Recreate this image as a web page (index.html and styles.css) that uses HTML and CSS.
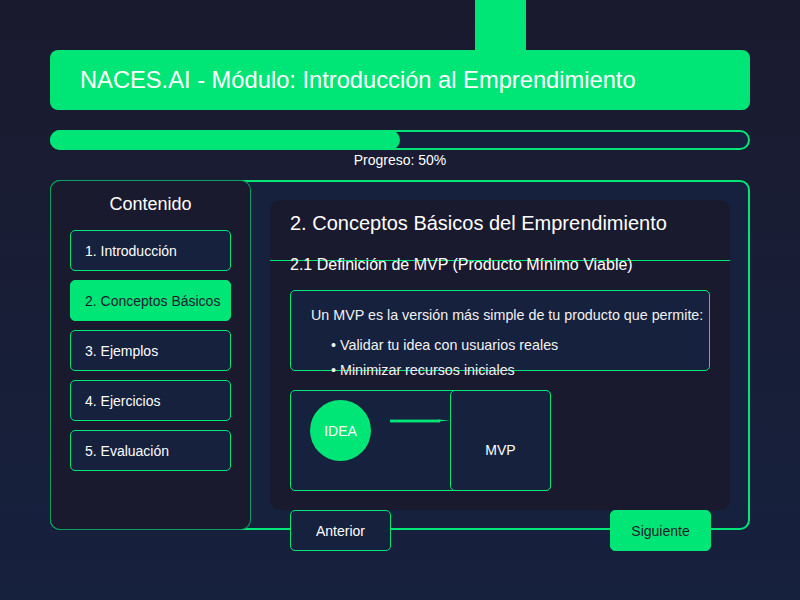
FILE: index.html
```html
<!DOCTYPE html>
<html lang="es">
<head>
<meta charset="utf-8">
<title>NACES.AI</title>
<link rel="stylesheet" href="styles.css">
</head>
<body>
<div class="top-tab"></div>
<header class="header">NACES.AI - Módulo: Introducción al Emprendimiento</header>
<div class="progress"><div class="progress-fill" style="width: 50%"></div></div>
<div class="progress-label">Progreso: 50%</div>
<main class="panel">
  <aside class="sidebar">
    <div class="sidebar-title">Contenido</div>
    <nav class="nav">
      <div class="nav-item">1. Introducción</div>
      <div class="nav-item active">2. Conceptos Básicos</div>
      <div class="nav-item">3. Ejemplos</div>
      <div class="nav-item">4. Ejercicios</div>
      <div class="nav-item">5. Evaluación</div>
    </nav>
  </aside>
  <section class="content">
    <div class="card">
      <h1 class="title">2. Conceptos Básicos del Emprendimiento</h1>
      <div class="divider"></div>
      <h2 class="subtitle">2.1 Definición de MVP (Producto Mínimo Viable)</h2>
      <div class="info">
        <p class="info-text">Un MVP es la versión más simple de tu producto que permite:</p>
        <ul class="info-list">
          <li>• Validar tu idea con usuarios reales</li>
          <li>• Minimizar recursos iniciales</li>
        </ul>
      </div>
      <div class="diagram">
        <div class="idea">IDEA</div>
        <svg class="arrow" width="60" height="10" viewBox="0 0 60 10">
          <rect x="0" y="3.6" width="50" height="2.8" fill="#00e676"/>
          <polygon points="48,3.6 60,4.4 48,5.4" fill="#00e676"/>
        </svg>
        <div class="mvp">MVP</div>
      </div>
    </div>
    <div class="buttons">
      <button class="btn">Anterior</button>
      <button class="btn primary">Siguiente</button>
    </div>
  </section>
</main>
</body>
</html>
```
FILE: styles.css
```css
html, body {
  margin: 0;
  padding: 0;
}
body {
  width: 800px;
  height: 600px;
  overflow: hidden;
  background: linear-gradient(180deg, #1a1a2e 0%, #16213e 100%);
  font-family: "Liberation Sans", Arial, sans-serif;
  color: #ffffff;
}
.top-tab {
  width: 51px;
  height: 50px;
  margin-left: 475px;
  background: #00e676;
}
.header {
  margin: 0 50px;
  height: 60px;
  box-sizing: border-box;
  padding-left: 30px;
  background: #00e676;
  border-radius: 8px;
  font-size: 23.7px;
  line-height: 60px;
  color: #ffffff;
}
.progress {
  margin: 20px 50px 0;
  height: 20px;
  border-radius: 10px;
  background: #16213e;
  box-shadow: inset 0 0 0 2px #00e676;
}
.progress-fill {
  height: 100%;
  background: #00e676;
  border-radius: 10px;
}
.progress-label {
  font-size: 14px;
  line-height: 20px;
  text-align: center;
}
.panel {
  margin: 10px 50px 0;
  height: 350px;
  box-sizing: border-box;
  border: 2px solid #00e676;
  border-radius: 10px;
  background: #16213e;
  display: grid;
  grid-template-columns: 200px 1fr;
  align-items: start;
}
.sidebar {
  width: 201px;
  height: 350px;
  margin: -2px 0 0 -2px;
  box-sizing: border-box;
  padding: 13px 19px 0;
  background: #1a1a2e;
  border: 1px solid rgba(0, 230, 118, 0.65);
  border-radius: 10px;
}
.sidebar-title {
  font-size: 18px;
  line-height: 22px;
  text-align: center;
  margin-top: -1px;
  margin-bottom: 15px;
}
.nav {
  display: flex;
  flex-direction: column;
  gap: 10px;
  width: 161px;
}
.nav-item {
  height: 41px;
  box-sizing: border-box;
  border: 1px solid #00e676;
  border-radius: 5px;
  background: #16213e;
  padding-left: 14px;
  display: flex;
  align-items: center;
  font-size: 14px;
}
.nav-item + .nav-item {
  margin-top: -1px;
}
.nav-item.active {
  background: #00e676;
  color: #1a1a2e;
}
.content {
  padding: 18px 18px 0;
}
.card {
  height: 310px;
  box-sizing: border-box;
  padding: 11px 20px 0;
  background: #1a1a2e;
  border-radius: 10px;
}
.title {
  margin: 0;
  font-size: 20px;
  line-height: 24px;
  font-weight: normal;
}
.divider {
  height: 1px;
  margin: 25px -20px 0;
  background: #00e676;
}
.subtitle {
  margin: -6px 0 0;
  font-size: 16px;
  line-height: 20px;
  font-weight: normal;
}
.info {
  margin-top: 15px;
  height: 81px;
  box-sizing: border-box;
  border: 1px solid #00e676;
  border-radius: 5px;
  background: #16213e;
  padding: 14px 0 0 20px;
  font-size: 14.3px;
  color: #f2f2f2;
}
.info-text {
  margin: 0;
  line-height: 20px;
}
.info-list {
  list-style: none;
  margin: 8px 0 0;
  padding: 0 0 0 20px;
  line-height: 25px;
}
.diagram {
  margin-top: 19px;
  width: 261px;
  height: 101px;
  box-sizing: border-box;
  border: 1px solid #00e676;
  border-radius: 5px;
  background: #16213e;
  display: flex;
  align-items: flex-start;
}
.idea {
  width: 61px;
  height: 61px;
  flex-shrink: 0;
  margin: 9px 0 0 19px;
  border-radius: 50%;
  background: #00e676;
  display: flex;
  align-items: center;
  justify-content: center;
  font-size: 14px;
  line-height: 16px;
}
.arrow {
  display: block;
  flex-shrink: 0;
  margin: 25px 0 0 19px;
}
.mvp {
  width: 101px;
  height: 101px;
  flex-shrink: 0;
  margin: -1px -1px -1px 0;
  box-sizing: border-box;
  border: 1px solid #00e676;
  border-radius: 5px;
  background: #16213e;
  padding-top: 51px;
  text-align: center;
  font-size: 14px;
  line-height: 16px;
}
.buttons {
  display: flex;
  justify-content: space-between;
  padding: 0 19px 0 20px;
}
.btn {
  width: 101px;
  height: 41px;
  box-sizing: border-box;
  border: 1px solid #00e676;
  border-radius: 5px;
  background: #16213e;
  color: #ffffff;
  font-family: "Liberation Sans", Arial, sans-serif;
  font-size: 14px;
  padding: 0;
}
.btn.primary {
  background: #00e676;
  color: #1a1a2e;
}
```
